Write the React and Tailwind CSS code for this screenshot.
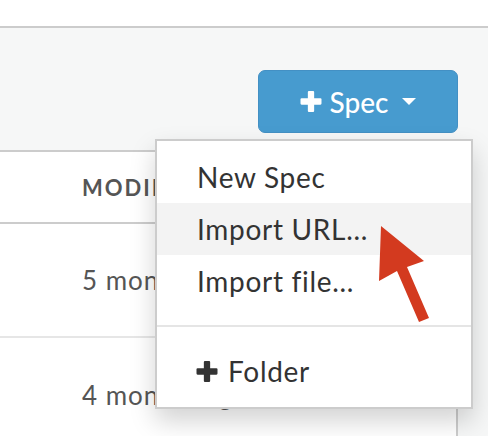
import React from 'react';

const PlusIcon = ({ className }) => (
    <svg viewBox="0 0 20 20" className={className} fill="currentColor">
        <rect x="7" y="0" width="6" height="20" rx="1" />
        <rect x="0" y="7" width="20" height="6" rx="1" />
    </svg>
);

const App = () => {
    return (
        <div className="relative w-[488px] h-[436px] overflow-hidden bg-[#f6f7f7]" style={{ fontFamily: 'Lato, "Open Sans", sans-serif' }}>
            {/* top bar */}
            <div className="h-[28px] bg-white border-b-2 border-[#cccccc]" />

            {/* toolbar */}
            <div className="h-[122px] flex justify-end pt-[42px] pr-[30px]">
                <div className="relative">
                    <button className="w-[200px] h-[63px] rounded-[7px] bg-[#479bcf] border border-[#4390c4] text-white flex items-center justify-center gap-[8px]">
                        <PlusIcon className="w-[22px] h-[21px]" />
                        <span className="text-[28px] leading-none font-medium">Spec</span>
                        <svg viewBox="0 0 14 7" className="w-[14px] h-[7px] ml-[6px]" fill="currentColor">
                            <path d="M0 0 L14 0 L7 7 Z" />
                        </svg>
                    </button>

                    {/* dropdown */}
                    <div className="absolute top-[69px] left-[-103px] w-[318px] bg-white border-2 border-[#cccccc] py-[10px] z-10 shadow-[0_12px_24px_rgba(0,0,0,0.175)] text-[28px] text-[#333] tracking-[0.7px]">
                        <div className="h-[52px] flex items-center pl-[40px]">New Spec</div>
                        <div className="h-[52px] flex items-center pl-[40px] bg-[#f3f3f3]">Import URL...</div>
                        <div className="h-[52px] flex items-center pl-[40px]">Import file...</div>
                        <div className="h-[2px] bg-[#e5e5e5] my-[18px]" />
                        <div className="h-[52px] flex items-center pl-[39px] gap-[10px]">
                            <PlusIcon className="w-[22px] h-[21px]" />
                            <span>Folder</span>
                        </div>
                    </div>
                </div>
            </div>

            {/* table panel */}
            <div className="w-[458px] h-[300px] bg-white border-t-2 border-r-2 border-[#cccccc]">
                <div className="h-[72px] flex items-center pl-[82px] border-b-2 border-[#cccccc] text-[22px] font-bold tracking-[2px] text-[#555] uppercase whitespace-nowrap">
                    Modified
                </div>
                <div className="h-[114px] flex items-center pl-[82px] border-b-2 border-[#e6e6e6] text-[26px] tracking-[1px] text-[#555] whitespace-nowrap">
                    5 months ago
                </div>
                <div className="h-[114px] flex items-center pl-[82px] text-[26px] tracking-[1px] text-[#555] whitespace-nowrap">
                    4 months ago
                </div>
            </div>

            {/* annotation arrow */}
            <svg className="absolute left-0 top-0 z-20 pointer-events-none" width="488" height="436">
                <polygon points="381,226 424,261 407,267 429,318 419,322 397,271 379,281" fill="#d33a1f" />
            </svg>
        </div>
    );
};

export default App;
